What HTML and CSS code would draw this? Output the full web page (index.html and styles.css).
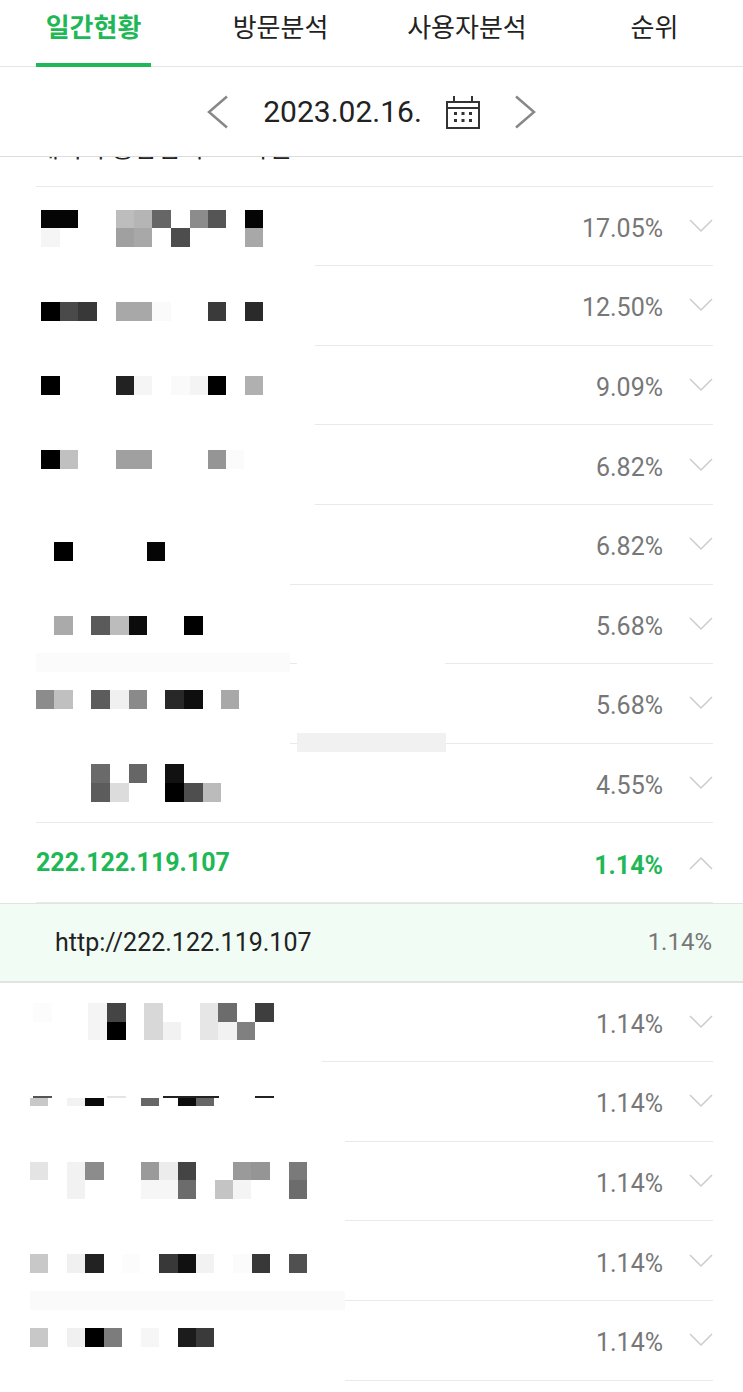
FILE: index.html
```html
<!DOCTYPE html>
<html lang="ko">
<head>
    <meta charset="UTF-8">
    <meta name="viewport" content="width=device-width, initial-scale=1.0">
    <title>일간현황</title>
    <link rel="stylesheet" href="styles.css">
</head>
<body>
    <nav class="tabs">
        <a class="tab tab-daily active">일간현황</a>
        <a class="tab tab-visit">방문분석</a>
        <a class="tab tab-user">사용자분석</a>
        <a class="tab tab-rank">순위</a>
    </nav>

    <div class="datebar">
        <svg class="nav-arrow" width="22" height="34" viewBox="0 0 22 34"><path d="M20 1.5 2 17l18 15.5"/></svg>
        <span class="date">2023.02.16.</span>
        <svg class="calendar" width="34" height="34" viewBox="0 0 34 34">
            <path class="cal-line" d="M1 7h32v26H1zM1 13h32M8 1v6M26 1v6"/>
            <path class="cal-dots" d="M8 17h3v3H8zM15.500 17h3v3h-3zM23 17h3v3h-3zM8 24h3v3H8zM15.500 24h3v3h-3zM23 24h3v3h-3z"/>
        </svg>
        <svg class="nav-arrow" width="22" height="34" viewBox="0 0 22 34"><path d="M2 1.500 20 17 2 32.500"/></svg>
    </div>

    <main class="report">
        <ul class="list">
            <li class="row row-scrolled">
                <span class="name">네이버 통합검색 - 모바일</span>
                <span class="pct">25%</span>
                <svg class="chev" width="24" height="14" viewBox="0 0 24 14"><path d="M1 1l11 11L23 1"/></svg>
            </li>
            <li class="row"><span class="pct">17.05%</span><svg class="chev" width="24" height="14" viewBox="0 0 24 14"><path d="M1 1l11 11L23 1"/></svg></li>
            <li class="row"><span class="pct">12.50%</span><svg class="chev" width="24" height="14" viewBox="0 0 24 14"><path d="M1 1l11 11L23 1"/></svg></li>
            <li class="row"><span class="pct">9.09%</span><svg class="chev" width="24" height="14" viewBox="0 0 24 14"><path d="M1 1l11 11L23 1"/></svg></li>
            <li class="row"><span class="pct">6.82%</span><svg class="chev" width="24" height="14" viewBox="0 0 24 14"><path d="M1 1l11 11L23 1"/></svg></li>
            <li class="row"><span class="pct">6.82%</span><svg class="chev" width="24" height="14" viewBox="0 0 24 14"><path d="M1 1l11 11L23 1"/></svg></li>
            <li class="row"><span class="pct">5.68%</span><svg class="chev" width="24" height="14" viewBox="0 0 24 14"><path d="M1 1l11 11L23 1"/></svg></li>
            <li class="row"><span class="pct">5.68%</span><svg class="chev" width="24" height="14" viewBox="0 0 24 14"><path d="M1 1l11 11L23 1"/></svg></li>
            <li class="row"><span class="pct">4.55%</span><svg class="chev" width="24" height="14" viewBox="0 0 24 14"><path d="M1 1l11 11L23 1"/></svg></li>
            <li class="row row-open">
                <span class="name">222.122.119.107</span>
                <span class="pct">1.14%</span>
                <svg class="chev" width="24" height="14" viewBox="0 0 24 14"><path d="M1 13 12 2l11 11"/></svg>
            </li>
            <li class="sub-row">
                <span class="sub-name">http://222.122.119.107</span>
                <span class="sub-pct">1.14%</span>
            </li>
            <li class="row"><span class="pct">1.14%</span><svg class="chev" width="24" height="14" viewBox="0 0 24 14"><path d="M1 1l11 11L23 1"/></svg></li>
            <li class="row"><span class="pct">1.14%</span><svg class="chev" width="24" height="14" viewBox="0 0 24 14"><path d="M1 1l11 11L23 1"/></svg></li>
            <li class="row"><span class="pct">1.14%</span><svg class="chev" width="24" height="14" viewBox="0 0 24 14"><path d="M1 1l11 11L23 1"/></svg></li>
            <li class="row"><span class="pct">1.14%</span><svg class="chev" width="24" height="14" viewBox="0 0 24 14"><path d="M1 1l11 11L23 1"/></svg></li>
            <li class="row"><span class="pct">1.14%</span><svg class="chev" width="24" height="14" viewBox="0 0 24 14"><path d="M1 1l11 11L23 1"/></svg></li>
        </ul>

        <!-- censored names, drawn over the list -->
        <svg class="mosaic" width="743" height="1235" viewBox="0 157 743 1235" shape-rendering="crispEdges">
            <!-- white patches over the dividers -->
            <g fill="#fff">
                <rect x="30" y="262" width="285" height="8"/>
                <rect x="30" y="342" width="285" height="8"/>
                <rect x="30" y="421" width="285" height="8"/>
                <rect x="30" y="501" width="285" height="8"/>
                <rect x="30" y="580" width="260" height="8"/>
                <rect x="297" y="660" width="148" height="8"/>
                <rect x="30" y="739" width="260" height="8"/>
                <rect x="30" y="1057" width="292" height="8"/>
                <rect x="30" y="1136" width="315" height="8"/>
                <rect x="30" y="1216" width="315" height="8"/>
                <rect x="30" y="1375" width="315" height="8"/>
            </g>
            <rect x="36" y="653" width="254" height="19" fill="#fbfbfb"/>
            <rect x="297" y="733" width="149" height="19" fill="#f1f1f1"/>
            <rect x="30" y="1291" width="315" height="19" fill="#fafafa"/>

            <rect x="41" y="210" width="37" height="18" fill="#050505"/>
            <rect x="41" y="228" width="19" height="19" fill="#f5f5f5"/>
            <rect x="116" y="210" width="18" height="18" fill="#bdbdbd"/>
            <rect x="134" y="210" width="18" height="18" fill="#b5b5b5"/>
            <rect x="152" y="210" width="19" height="18" fill="#666"/>
            <rect x="190" y="210" width="18" height="18" fill="#8c8c8c"/>
            <rect x="208" y="210" width="18" height="18" fill="#555"/>
            <rect x="245" y="210" width="18" height="18" fill="#050505"/>
            <rect x="116" y="228" width="18" height="19" fill="#a0a0a0"/>
            <rect x="134" y="228" width="18" height="19" fill="#a8a8a8"/>
            <rect x="171" y="228" width="19" height="19" fill="#4d4d4d"/>
            <rect x="245" y="228" width="18" height="19" fill="#a8a8a8"/>

            <rect x="41" y="302" width="19" height="19" fill="#000"/>
            <rect x="60" y="302" width="18" height="19" fill="#4a4a4a"/>
            <rect x="78" y="302" width="19" height="19" fill="#383838"/>
            <rect x="116" y="302" width="36" height="19" fill="#a8a8a8"/>
            <rect x="152" y="302" width="19" height="19" fill="#fafafa"/>
            <rect x="208" y="302" width="18" height="19" fill="#3a3a3a"/>
            <rect x="245" y="302" width="18" height="19" fill="#2a2a2a"/>

            <rect x="41" y="376" width="19" height="19" fill="#000"/>
            <rect x="116" y="376" width="18" height="19" fill="#222"/>
            <rect x="134" y="376" width="18" height="19" fill="#f5f5f5"/>
            <rect x="171" y="376" width="19" height="19" fill="#fafafa"/>
            <rect x="190" y="376" width="18" height="19" fill="#f4f4f4"/>
            <rect x="208" y="376" width="18" height="19" fill="#000"/>
            <rect x="245" y="376" width="18" height="19" fill="#b0b0b0"/>

            <rect x="41" y="450" width="19" height="19" fill="#000"/>
            <rect x="60" y="450" width="18" height="19" fill="#c0c0c0"/>
            <rect x="116" y="450" width="36" height="19" fill="#a0a0a0"/>
            <rect x="208" y="450" width="18" height="19" fill="#959595"/>
            <rect x="226" y="450" width="18" height="19" fill="#fbfbfb"/>

            <rect x="54" y="542" width="19" height="19" fill="#000"/>
            <rect x="147" y="542" width="18" height="19" fill="#050505"/>

            <rect x="54" y="616" width="19" height="19" fill="#aaa"/>
            <rect x="91" y="616" width="19" height="19" fill="#5a5a5a"/>
            <rect x="110" y="616" width="19" height="19" fill="#bcbcbc"/>
            <rect x="129" y="616" width="18" height="19" fill="#0c0c0c"/>
            <rect x="184" y="616" width="19" height="19" fill="#000"/>

            <rect x="36" y="690" width="18" height="19" fill="#8c8c8c"/>
            <rect x="54" y="690" width="19" height="19" fill="#c0c0c0"/>
            <rect x="91" y="690" width="19" height="19" fill="#5c5c5c"/>
            <rect x="110" y="690" width="19" height="19" fill="#f0f0f0"/>
            <rect x="129" y="690" width="18" height="19" fill="#8a8a8a"/>
            <rect x="165" y="690" width="19" height="19" fill="#282828"/>
            <rect x="184" y="690" width="19" height="19" fill="#0e0e0e"/>
            <rect x="221" y="690" width="18" height="19" fill="#a8a8a8"/>

            <rect x="91" y="764" width="19" height="19" fill="#6a6a6a"/>
            <rect x="129" y="764" width="18" height="19" fill="#666"/>
            <rect x="165" y="764" width="19" height="19" fill="#111"/>
            <rect x="91" y="783" width="19" height="19" fill="#5c5c5c"/>
            <rect x="110" y="783" width="19" height="19" fill="#dcdcdc"/>
            <rect x="165" y="783" width="19" height="19" fill="#000"/>
            <rect x="184" y="783" width="19" height="19" fill="#4e4e4e"/>
            <rect x="203" y="783" width="18" height="19" fill="#bbb"/>

            <rect x="33" y="1003" width="19" height="19" fill="#fcfcfc"/>
            <rect x="88" y="1003" width="19" height="37" fill="#f4f4f4"/>
            <rect x="107" y="1003" width="19" height="19" fill="#444"/>
            <rect x="107" y="1022" width="19" height="18" fill="#000"/>
            <rect x="144" y="1003" width="19" height="37" fill="#d8d8d8"/>
            <rect x="163" y="1022" width="18" height="18" fill="#f2f2f2"/>
            <rect x="200" y="1003" width="18" height="37" fill="#e6e6e6"/>
            <rect x="218" y="1003" width="19" height="19" fill="#6c6c6c"/>
            <rect x="218" y="1022" width="19" height="18" fill="#f2f2f2"/>
            <rect x="237" y="1022" width="18" height="18" fill="#808080"/>
            <rect x="255" y="1003" width="19" height="19" fill="#3e3e3e"/>

            <rect x="33" y="1096" width="19" height="2" fill="#555"/>
            <rect x="107" y="1096" width="19" height="2" fill="#e4e4e4"/>
            <rect x="163" y="1096" width="56" height="2" fill="#222"/>
            <rect x="255" y="1096" width="19" height="2" fill="#222"/>
            <rect x="30" y="1098" width="18" height="8" fill="#c8c8c8"/>
            <rect x="67" y="1098" width="18" height="8" fill="#f2f2f2"/>
            <rect x="85" y="1098" width="19" height="8" fill="#0a0a0a"/>
            <rect x="141" y="1098" width="18" height="8" fill="#666"/>
            <rect x="178" y="1098" width="18" height="8" fill="#0c0c0c"/>
            <rect x="196" y="1098" width="18" height="8" fill="#666"/>

            <rect x="30" y="1162" width="18" height="18" fill="#e4e4e4"/>
            <rect x="67" y="1162" width="18" height="18" fill="#f2f2f2"/>
            <rect x="85" y="1162" width="19" height="18" fill="#8c8c8c"/>
            <rect x="141" y="1162" width="18" height="18" fill="#9a9a9a"/>
            <rect x="159" y="1162" width="19" height="18" fill="#ececec"/>
            <rect x="178" y="1162" width="18" height="18" fill="#444"/>
            <rect x="233" y="1162" width="18" height="18" fill="#9a9a9a"/>
            <rect x="251" y="1162" width="19" height="18" fill="#959595"/>
            <rect x="289" y="1162" width="18" height="18" fill="#7a7a7a"/>
            <rect x="67" y="1180" width="18" height="19" fill="#f2f2f2"/>
            <rect x="141" y="1180" width="37" height="19" fill="#f6f6f6"/>
            <rect x="178" y="1180" width="18" height="19" fill="#6c6c6c"/>
            <rect x="215" y="1180" width="18" height="19" fill="#c4c4c4"/>
            <rect x="233" y="1180" width="18" height="19" fill="#f4f4f4"/>
            <rect x="289" y="1180" width="18" height="19" fill="#6c6c6c"/>

            <rect x="30" y="1254" width="18" height="19" fill="#c8c8c8"/>
            <rect x="67" y="1254" width="18" height="19" fill="#f0f0f0"/>
            <rect x="85" y="1254" width="19" height="19" fill="#222"/>
            <rect x="122" y="1254" width="18" height="19" fill="#fcfcfc"/>
            <rect x="159" y="1254" width="19" height="19" fill="#383838"/>
            <rect x="178" y="1254" width="18" height="19" fill="#111"/>
            <rect x="196" y="1254" width="18" height="19" fill="#f2f2f2"/>
            <rect x="233" y="1254" width="19" height="19" fill="#fbfbfb"/>
            <rect x="252" y="1254" width="18" height="19" fill="#383838"/>
            <rect x="289" y="1254" width="18" height="19" fill="#505050"/>

            <rect x="30" y="1328" width="18" height="19" fill="#c8c8c8"/>
            <rect x="67" y="1328" width="18" height="19" fill="#f0f0f0"/>
            <rect x="85" y="1328" width="19" height="19" fill="#000"/>
            <rect x="104" y="1328" width="18" height="19" fill="#7c7c7c"/>
            <rect x="141" y="1328" width="18" height="19" fill="#f6f6f6"/>
            <rect x="178" y="1328" width="18" height="19" fill="#1c1c1c"/>
            <rect x="196" y="1328" width="18" height="19" fill="#3a3a3a"/>
        </svg>
    </main>
</body>
</html>
```

FILE: styles.css
```css
html, body {
    margin: 0;
    padding: 0;
}
body {
    width: 743px;
    height: 1392px;
    overflow: hidden;
    background-color: #fff;
    font-family: Roboto, "Noto Sans CJK KR", sans-serif;
}

/* tabs */
.tabs {
    display: flex;
    height: 66px;
    padding-left: 36px;
    box-sizing: content-box;
    border-bottom: 1px solid #e4e4e4;
}
.tab {
    display: block;
    height: 66px;
    line-height: 56px;
    text-align: center;
    font-size: 26px;
    color: #222;
}
.tab-daily {
    width: 115px;
}
.tab-visit {
    width: 115px;
    margin-left: 72px;
}
.tab-user {
    width: 140px;
    margin-left: 59px;
}
.tab-rank {
    width: 67px;
    margin-left: 84px;
}
.tab.active {
    color: #1fb856;
    font-weight: 700;
    border-bottom: 4px solid #1fb856;
    height: 63px;
    position: relative;
    z-index: 1;
}

/* date */
.datebar {
    display: flex;
    align-items: center;
    justify-content: center;
    height: 89px;
    border-bottom: 1px solid #dcdcdc;
    box-sizing: content-box;
    position: relative;
}
.date {
    margin-left: 34px;
    margin-right: 24px;
    font-size: 30px;
    color: #222;
}
.nav-arrow {
    fill: none;
    stroke: #888;
    stroke-width: 2.500;
}
.calendar {
    margin-right: 34px;
}
.cal-line {
    fill: none;
    stroke: #333;
    stroke-width: 2;
}
.cal-dots {
    fill: #333;
}

/* list */
.report {
    position: relative;
    height: 1235px;
    overflow: hidden;
}
.list {
    list-style: none;
    margin: 0;
    padding: 0;
}
.row {
    display: flex;
    align-items: center;
    height: 79.6px;
    box-sizing: border-box;
    margin: 0 30px 0 36px;
    border-bottom: 1px solid #e9e9e9;
}
.row-scrolled {
    margin-top: -50px;
}
.name {
    font-size: 25px;
    color: #222;
}
.pct {
    margin-left: auto;
    padding-top: 5px;
    font-size: 25px;
    color: #777;
}
.chev {
    margin-left: 26px;
    fill: none;
    stroke: #ccc;
    stroke-width: 1.500;
}
.row-open {
    margin-left: 36px;
    margin-right: 30px;
}
.row-open .name,
.row-open .pct {
    color: #1fb856;
    font-weight: 700;
}
.sub-row {
    display: flex;
    align-items: center;
    height: 79.6px;
    box-sizing: border-box;
    padding: 0 31px 0 55px;
    background-color: #f1fcf5;
    border-top: 1px solid #e2e2e2;
    border-bottom: 2px solid #e2e2e2;
}
.sub-name {
    font-size: 25px;
    color: #222;
}
.sub-pct {
    margin-left: auto;
    font-size: 24px;
    color: #777;
}

/* censor blocks */
.mosaic {
    position: absolute;
    top: 0;
    left: 0;
}
```
